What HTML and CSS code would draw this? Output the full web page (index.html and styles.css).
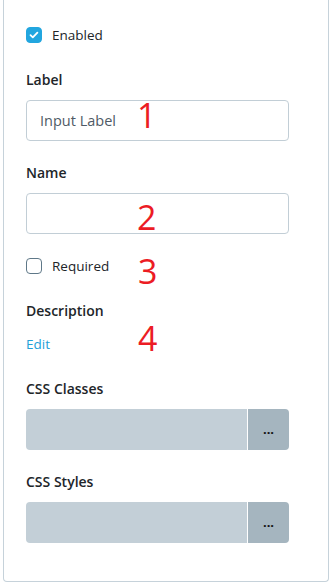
FILE: index.html
```html
<!DOCTYPE html>
<html lang="en">
<head>
  <meta charset="UTF-8">
  <meta name="viewport" content="width=device-width, initial-scale=1">
  <title>Field Properties</title>
  <link rel="stylesheet" href="styles.css">
</head>
<body>

  <div class="panel">

    <label class="check-row">
      <span class="check checked">
        <svg viewBox="0 0 16 16" width="16" height="16"><path d="M4.5 8.2l2.3 2.2 4.6-4.8" fill="none" stroke="#fff" stroke-width="1.8" stroke-linecap="round" stroke-linejoin="round"/></svg>
      </span>
      Enabled
    </label>

    <div class="field">
      <div class="field-label">Label</div>
      <input class="text-input" type="text" placeholder="Input Label">
    </div>

    <div class="field">
      <div class="field-label">Name</div>
      <input class="text-input" type="text">
    </div>

    <label class="check-row">
      <span class="check"></span>
      Required
    </label>

    <div class="field field-text">
      <div class="field-label field-label-tight">Description</div>
      <a class="edit-link" href="#">Edit</a>
    </div>

    <div class="field">
      <div class="field-label">CSS Classes</div>
      <div class="input-group">
        <div class="group-input"></div>
        <button class="group-btn">...</button>
      </div>
    </div>

    <div class="field">
      <div class="field-label">CSS Styles</div>
      <div class="input-group">
        <div class="group-input"></div>
        <button class="group-btn">...</button>
      </div>
    </div>

    <!-- annotation numbers -->
    <span class="mark mark-1">1</span>
    <span class="mark mark-2">2</span>
    <span class="mark mark-3">3</span>
    <span class="mark mark-4">4</span>
  </div>

</body>
</html>
```

FILE: styles.css
```css
body {
  margin: 0;
  padding: 0 2px 0 3px;
  font-family: "Open Sans", "Noto Sans", sans-serif;
  font-size: 13.5px;
  color: #212529;
  background: #fff;
}

.panel {
  position: relative;
  height: 582px;
  box-sizing: border-box;
  padding: 25px 39px 0 22px;
  border: 1px solid #c6d2da;
  border-top: 0;
  border-radius: 0 0 4px 4px;
}

/* checkbox rows */
.check-row {
  display: flex;
  align-items: center;
  gap: 10px;
  height: 20px;
  line-height: 20px;
  margin-bottom: 25px;
}

.check {
  width: 16px;
  height: 16px;
  box-sizing: border-box;
  border: 1.5px solid #5f7888;
  border-radius: 4px;
  display: flex;
}

.check.checked {
  background: #22a6df;
  border-color: #22a6df;
}

.check.checked svg {
  margin: -1.5px;
}

/* fields */
.field {
  margin-bottom: 22px;
}

.field-text {
  margin-bottom: 25px;
}

.field-label {
  font-size: 14px;
  font-weight: 600;
  line-height: 20px;
  margin-bottom: 10px;
}

.field-label-tight {
  margin-bottom: 13px;
}

.text-input {
  display: block;
  width: 100%;
  height: 41px;
  box-sizing: border-box;
  padding: 0 13px;
  border: 1px solid #c2ced6;
  border-radius: 4px;
  font-family: inherit;
  font-size: 14.5px;
  color: #495057;
  outline: none;
}

.text-input::placeholder {
  color: #4f5a66;
}

.edit-link {
  display: block;
  line-height: 20px;
  color: #22a0d8;
  text-decoration: none;
}

.input-group {
  display: flex;
  height: 41px;
}

.group-input {
  flex: 1;
  background: #c3cfd7;
  border-radius: 4px 0 0 4px;
}

.group-btn {
  width: 41px;
  margin-left: 1px;
  border: 0;
  border-radius: 0 4px 4px 0;
  background: #a5b5bf;
  color: #111;
  font-family: inherit;
  font-size: 13px;
  font-weight: 700;
  padding: 0 0 2px;
}

/* red numbers */
.mark {
  position: absolute;
  font-family: "Open Sans", sans-serif;
  font-size: 34px;
  line-height: 1;
  color: #ec1c24;
}

.mark-1 { left: 133px; top: 98px; }
.mark-2 { left: 133px; top: 200px; }
.mark-3 { left: 134px; top: 254px; }
.mark-4 { left: 134px; top: 321px; }
```
